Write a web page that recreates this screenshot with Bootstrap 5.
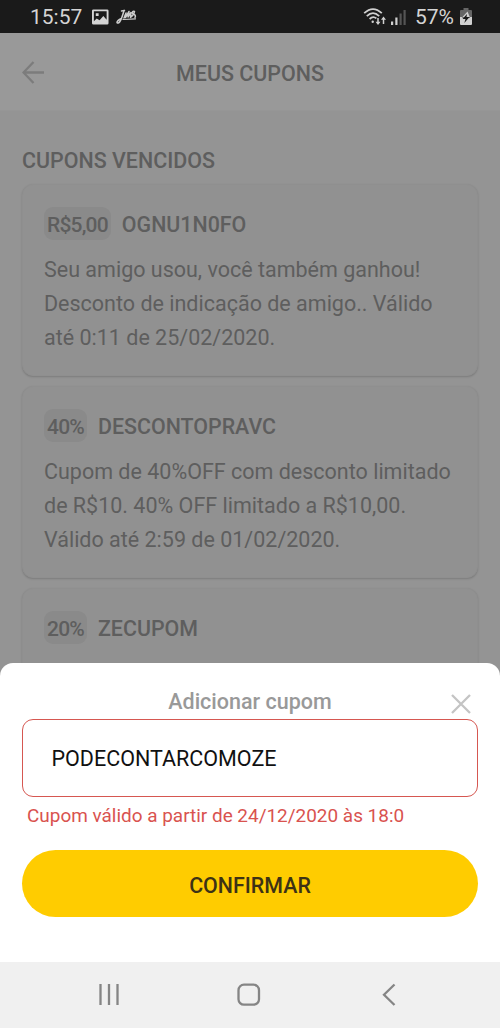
<!DOCTYPE html>
<html lang="pt-BR">
<head>
<meta charset="utf-8">
<meta name="viewport" content="width=device-width, initial-scale=1">
<title>Meus cupons</title>
<link href="https://cdn.jsdelivr.net/npm/bootstrap@5.3.0/dist/css/bootstrap.min.css" rel="stylesheet">
<style>
  body { font-family: Roboto, "Liberation Sans", sans-serif; background: #949494; color: #5e5e5e; }
  svg { display: block; flex: none; }
  .screen { height: 1028px; }
  .statusbar { height: 33px; background: #1a1a1a; color: #d4d4d4; font-size: 21px; line-height: 34px; padding: 0 28px 0 30px; }
  .signal-icon { margin-left: 3px; }
  .charge-label { margin-left: 8px; }
  .battery-icon { margin-left: 6px; }
  .photo-icon { margin-left: 10px; }
  .app-icon { margin-left: 7px; }
  .topbar { height: 78px; background: #999; padding: 2px 22px 0; border-bottom: 1px solid #969696; }
  .topbar .heading { margin-right: 22px; padding-top: 2px; }
  .heading { font-size: 21.45px; font-weight: 500; line-height: 34px; margin: 0; }
  .page-body { padding: 33px 22px 0; min-height: 0; }
  .section-title { margin-bottom: 6px; }
  .coupon { height: 192px; padding: 22px 10px 0 21px; border: 1px solid #8f8f8f; border-radius: 11px; background: #919191; box-shadow: 0 1px 2px rgba(0,0,0,.17); margin-bottom: 10px; }
  .coupon-value { height: 33px; padding: 0 3px; border-radius: 9px; background: #8a8a8a; font-size: 21px; font-weight: 500; line-height: 36px; letter-spacing: -.8px; }
  .coupon-code { margin-left: 11px; font-size: 21.4px; font-weight: 500; line-height: 36px; height: 33px; }
  .coupon-text { font-size: 21.5px; line-height: 34px; margin: 13px 0 0; white-space: nowrap; }
  .sheet { height: 299px; border-radius: 13px 13px 0 0; background: #fff; padding: 22px 22px 0; }
  .sheet-title { height: 34px; font-size: 21.5px; font-weight: 500; line-height: 34px; color: #999; }
  .coupon-input, .coupon-input:focus { height: 78px; border: 1.5px solid #d65751; border-radius: 11px; padding: 0 28px 0 28.5px; font-size: 21.5px; color: #111; }
  .error-text { height: 53px; padding: 1px 5px; color: #d9534f; font-size: 18.95px; line-height: 36px; }
  .confirm { height: 67px; background: #fc0; color: #3d3215; border-radius: 34px; font-size: 21.4px; font-weight: 500; padding: 5px 0 0; }
  .softkeys { height: 66px; background: #f0f0f0; }
  .close-icon { right: 6px; top: 8px; }
</style>
</head>
<body>
<div class="screen d-flex flex-column overflow-hidden">
  <div class="statusbar d-flex align-items-center flex-shrink-0">
    <span>15:57</span>
    <svg class="photo-icon" width="17" height="16" viewBox="0 0 18 16">
      <path fill="#d4d4d4" fill-rule="evenodd" d="M1.500 0h14.500q1.500 0 1.500 1.500v13q0 1.500-1.500 1.500H1.500Q0 16 0 14.500v-13Q0 0 1.500 0zM2 2v10.500l3-3 3 2 4-4.500 3.500 4V2zM4 4h3v3H4z"/>
    </svg>
    <svg class="app-icon" width="22" height="18" viewBox="0 0 22 18" fill="none" stroke="#ccc" stroke-linecap="round" stroke-linejoin="round">
      <path stroke-width="1.500" d="M8 2.500Q6 10 4 13.500Q2 16 1 14.500Q1 12.500 5.500 10.500"/>
      <path stroke-width="1.500" d="M5.500 3l3-.500M8 10l2-5-.500 4.500L13 3.500l-1 5.500 3-4.500-.500 5Q18 7 18.500 3.500Q16 2.500 16.500 5.500Q20.500 7 19 9.500"/>
      <path stroke-width="1.200" d="M7 11.500l12.500-.700"/>
    </svg>
    <svg class="ms-auto" width="24" height="20" viewBox="0 0 24 20" fill="none" stroke="#d0d0d0" stroke-width="1.8">
      <path d="M1.200 6.200Q10 -2 18.800 6.200M3.800 9.200Q10 3 16.200 9.200M6.600 12Q10 8.600 13.400 11.400"/>
      <circle cx="9.700" cy="14.700" r="1.200" fill="#d0d0d0" stroke="none"/>
      <path d="M15 11v5M20.500 17v-5.500" stroke-width="1.500"/>
      <path d="M12.500 14.700h5L15 18zM18 12.800h5L20.500 9.500z" fill="#d0d0d0" stroke="none"/>
    </svg>
    <svg class="signal-icon" width="17" height="20" viewBox="0 0 17 20">
      <path fill="#d0d0d0" d="M1 14.500h2.200V18H1zM5.300 10.500h2.200V18H5.300z"/>
      <path fill="#555" d="M9.500 6.500h2.200V18H9.500zM13.500 3h2.200v15h-2.200z"/>
    </svg>
    <span class="charge-label">57%</span>
    <svg class="battery-icon" width="12" height="20" viewBox="0 0 12 20">
      <path fill="#666" d="M3.500 1h5v2H11q1 0 1 1v6H0V4q0-1 1-1h2.500z"/>
      <path fill="#d0d0d0" d="M0 10h12v7q0 1-1 1H1q-1 0-1-1zM7.500 4.500L2 10.500h8z"/>
      <path fill="#1a1a1a" d="M7 7L2.500 12h3L4.300 16l5.200-6H6.500z"/>
    </svg>
  </div>

  <header class="topbar d-flex align-items-center flex-shrink-0">
    <svg width="22" height="24" viewBox="0 0 22 24" fill="none" stroke="#7c7c7c" stroke-width="2.300"><path d="M11.500 1L1.500 11.500 11.500 22M1.500 11.500H22"/></svg>
    <h1 class="heading flex-grow-1 text-center">MEUS CUPONS</h1>
  </header>

  <main class="page-body flex-grow-1 overflow-hidden">
    <h2 class="heading section-title">CUPONS VENCIDOS</h2>
    <article class="coupon">
      <div class="d-flex"><span class="coupon-value">R$5,00</span><span class="coupon-code">OGNU1N0FO</span></div>
      <p class="coupon-text">Seu amigo usou, você também ganhou!<br>Desconto de indicação de amigo.. Válido<br>até 0:11 de 25/02/2020.</p>
    </article>
    <article class="coupon">
      <div class="d-flex"><span class="coupon-value">40%</span><span class="coupon-code">DESCONTOPRAVC</span></div>
      <p class="coupon-text">Cupom de 40%OFF com desconto limitado<br>de R$10. 40% OFF limitado a R$10,00.<br>Válido até 2:59 de 01/02/2020.</p>
    </article>
    <article class="coupon">
      <div class="d-flex"><span class="coupon-value">20%</span><span class="coupon-code">ZECUPOM</span></div>
    </article>
  </main>

  <section class="sheet flex-shrink-0">
    <div class="sheet-title text-center position-relative">Adicionar cupom
      <svg class="close-icon position-absolute" width="22" height="22" viewBox="0 0 22 22" stroke="#c4c4c4" stroke-width="2.300"><path d="M2 2l18 18M20 2L2 20"/></svg>
    </div>
    <input class="coupon-input form-control shadow-none" value="PODECONTARCOMOZE" aria-label="Cupom">
    <div class="error-text">Cupom válido a partir de 24/12/2020 às 18:0</div>
    <button class="confirm btn w-100 border-0">CONFIRMAR</button>
  </section>

  <nav class="softkeys flex-shrink-0">
    <svg width="500" height="66" viewBox="0 0 500 66" fill="none" stroke="#858585" stroke-width="2.300">
      <path d="M100.500 22v21M109 22v21M117.500 22v21"/>
      <rect x="238.500" y="22.700" width="20.500" height="20" rx="5.500"/>
      <path d="M394.500 22.500L384 32.700 394.500 43"/>
    </svg>
  </nav>
</div>
<script src="https://cdn.jsdelivr.net/npm/bootstrap@5.3.0/dist/js/bootstrap.bundle.min.js"></script>
</body>
</html>
